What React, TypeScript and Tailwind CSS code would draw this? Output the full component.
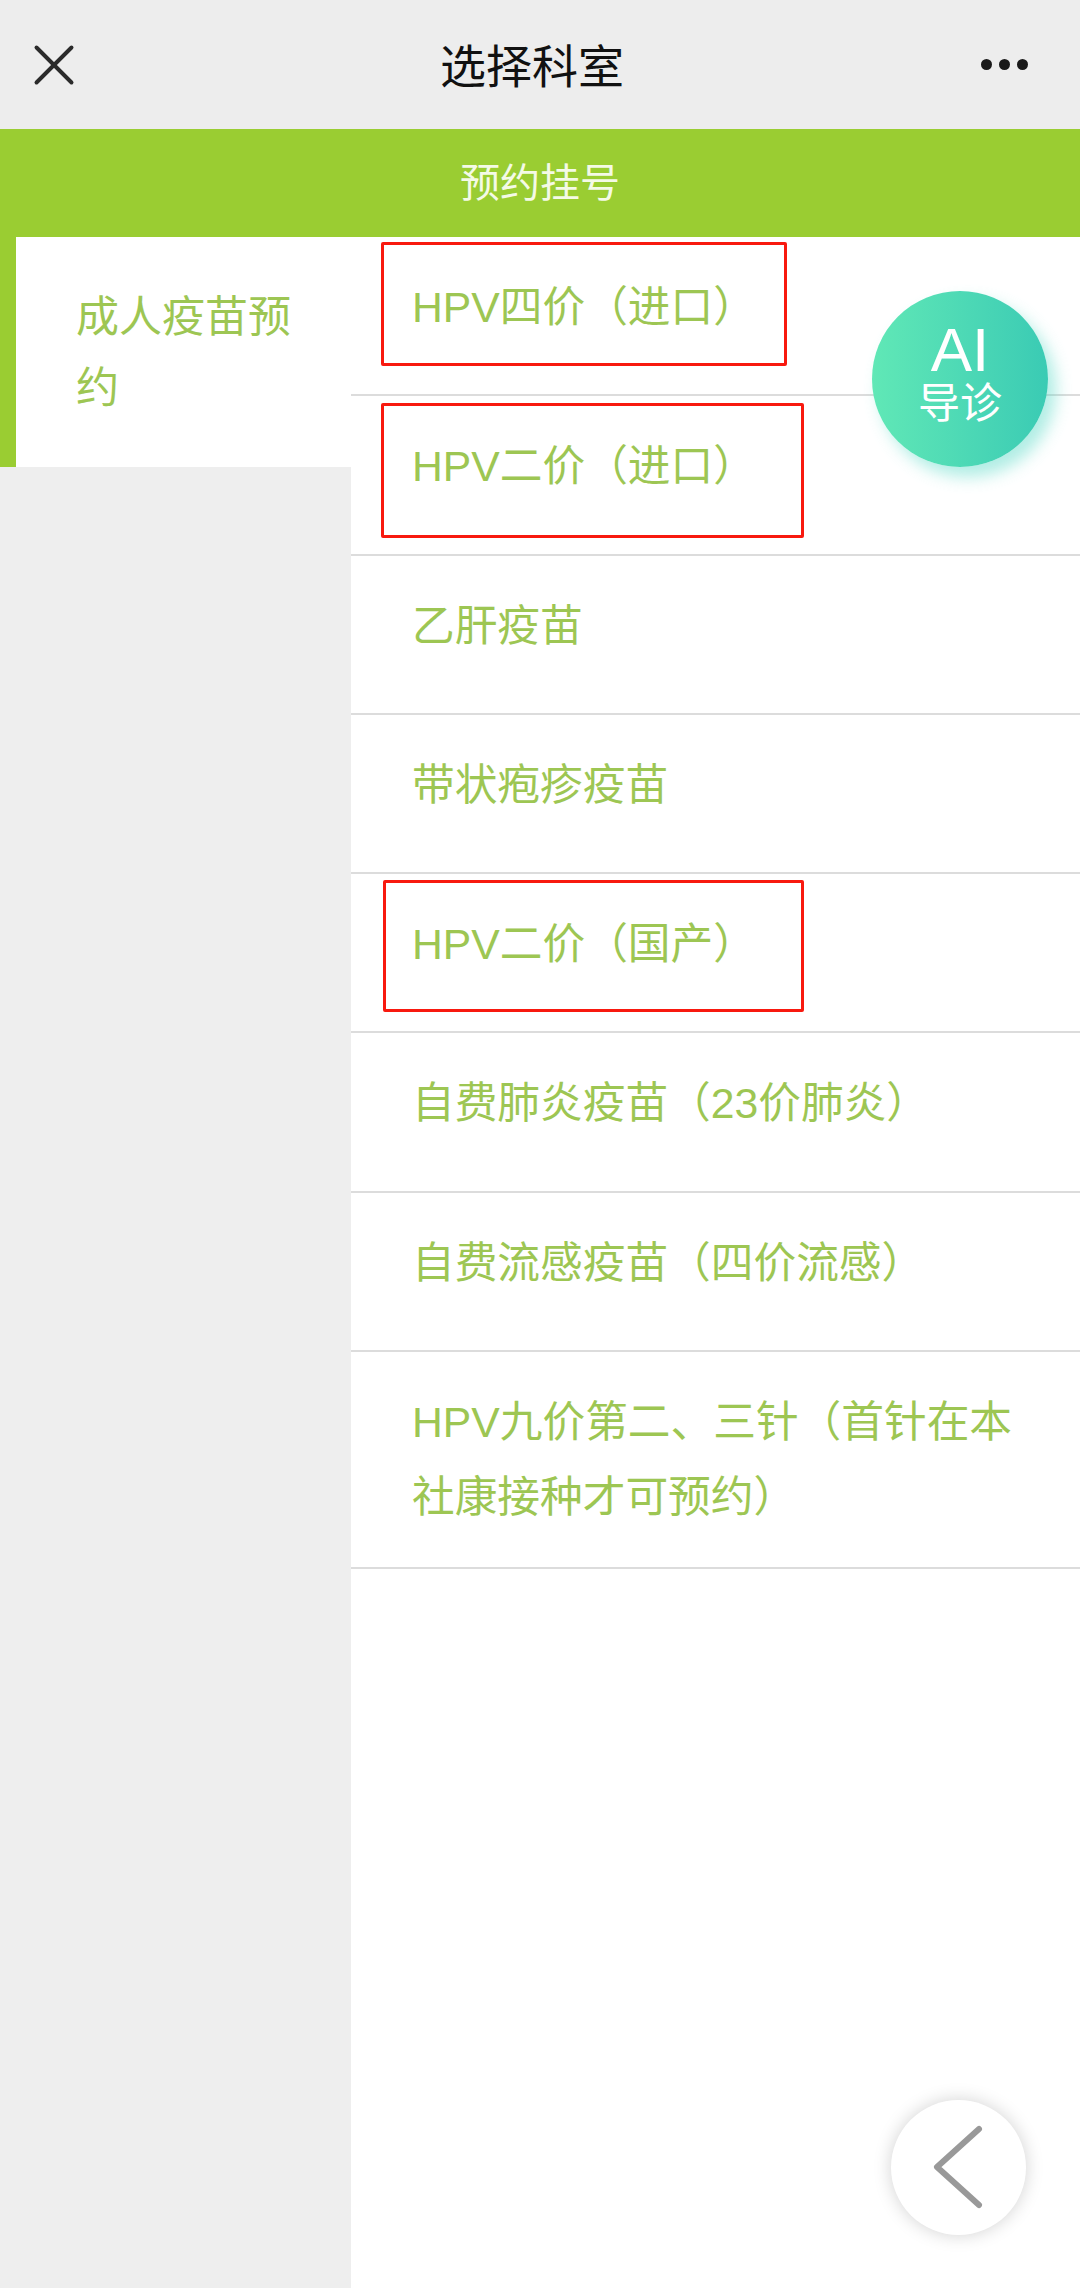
import { X } from "lucide-react";

const rows = [
  "HPV四价（进口）",
  "HPV二价（进口）",
  "乙肝疫苗",
  "带状疱疹疫苗",
  "HPV二价（国产）",
  "自费肺炎疫苗（23价肺炎）",
  "自费流感疫苗（四价流感）",
  "HPV九价第二、三针（首针在本社康接种才可预约）",
];

export default function App() {
  return (
    <div className="relative h-[2288px] w-[1080px] overflow-hidden bg-white font-['Liberation_Sans','Noto_Sans_CJK_SC',sans-serif]">
      {/* top bar */}
      <header className="flex h-[129px] items-center justify-between bg-[#ededed] pl-[19px] pr-[52px]">
        <X size={70} strokeWidth={1.35} className="text-[#2b2b2b]" />
        <h1 className="ml-[-6px] mt-[5px] text-[46px] font-normal text-[#111111]">选择科室</h1>
        <div className="flex gap-[7px]">
          <span className="h-[11px] w-[11px] rounded-full bg-[#1a1a1a]" />
          <span className="h-[11px] w-[11px] rounded-full bg-[#1a1a1a]" />
          <span className="h-[11px] w-[11px] rounded-full bg-[#1a1a1a]" />
        </div>
      </header>

      <div className="flex h-[108px] items-center justify-center bg-[#9acd32] text-[40px] text-[#f4fae6]">
        预约挂号
      </div>

      <div className="flex h-[2051px]">
        <aside className="w-[351px] shrink-0 bg-[#eeeeee]">
          <div className="h-[230px] border-l-[16px] border-[#9acd32] bg-white pl-[60px] pr-[40px] pt-[45px] text-[43px] leading-[71px] text-[#9dc653]">
            成人疫苗预约
          </div>
        </aside>
        <ul className="flex-1">
          {rows.map((row) => (
            <li
              key={row}
              className="min-h-[159.3px] border-b-2 border-[#dcdcdc] pb-[32px] pl-[61px] pr-[40px] pt-[33px] text-[42.7px] leading-[75px] text-[#9dc653]"
            >
              {row}
            </li>
          ))}
        </ul>
      </div>

      {/* red annotation boxes */}
      <div className="absolute left-[381px] top-[242px] h-[124px] w-[406px] rounded-[2px] border-[3px] border-[#f8190f]" />
      <div className="absolute left-[381px] top-[403px] h-[135px] w-[423px] rounded-[2px] border-[3px] border-[#f8190f]" />
      <div className="absolute left-[383px] top-[880px] h-[132px] w-[421px] rounded-[2px] border-[3px] border-[#f8190f]" />

      {/* AI button */}
      <div className="absolute left-[872px] top-[291px] flex h-[176px] w-[176px] flex-col items-center justify-center rounded-full bg-gradient-to-r from-[#60e8b6] to-[#3acbb4] pb-[8px] text-white shadow-[8px_10px_16px_rgba(80,215,195,0.45)]">
        <span className="text-[62px] leading-[50px]">AI</span>
        <span className="mt-[7px] text-[42px] leading-[44px]">导诊</span>
      </div>

      {/* back button */}
      <div className="absolute left-[891px] top-[2100px] flex h-[135px] w-[135px] items-center justify-center rounded-full bg-white shadow-[0_0_18px_rgba(0,0,0,0.18)]">
        <svg width="135" height="135" viewBox="0 0 135 135" fill="none">
          <path d="M88 29 L46 67 L88 105" stroke="#999999" strokeWidth="6" strokeLinecap="round" strokeLinejoin="round" />
        </svg>
      </div>
    </div>
  );
}
